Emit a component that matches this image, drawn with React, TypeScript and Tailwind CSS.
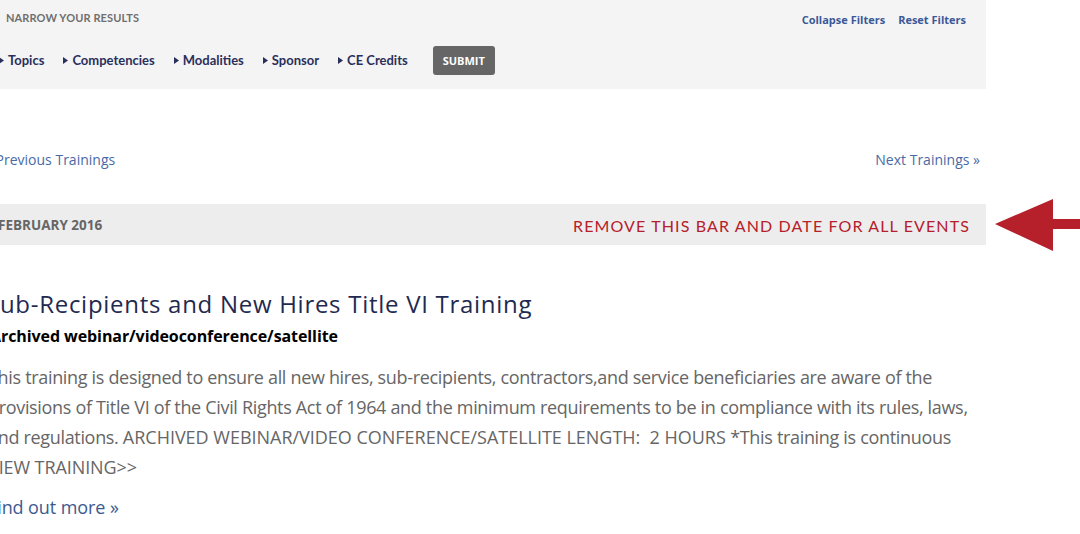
import React from "react";

const Tri = () => (
  <svg width="5" height="7" viewBox="0 0 5 7" className="mr-[4px] mt-[1px]">
    <path d="M0 0 L5 3.5 L0 7 Z" fill="#2b2f5c" />
  </svg>
);

const filters = ["Topics", "Competencies", "Modalities", "Sponsor", "CE Credits"];

export default function App() {
  return (
    <div className="relative w-[1080px] h-[534px] overflow-hidden bg-white font-['Open_Sans',sans-serif]">
      <div className="ml-[-12px] w-[998px]">
        {/* Filter box */}
        <div className="h-[89px] bg-[#f4f4f4] pl-[11px] pr-[20px]">
          <div className="flex justify-between items-start pt-[11px]">
            <div className="ml-[7px] text-[11px] leading-[14px] font-bold text-[#6f6f6f] tracking-[0.01em] font-['Lato',sans-serif]">
              NARROW YOUR RESULTS
            </div>
            <div className="flex gap-[13px] mt-[2px] text-[11px] leading-[14px] font-bold text-[#3b5998]">
              <span>Collapse Filters</span>
              <span>Reset Filters</span>
            </div>
          </div>
          <div className="flex items-center mt-[19px]">
            {filters.map((f) => (
              <div
                key={f}
                className="flex items-center mr-[19px] text-[13px] leading-[18px] font-bold text-[#2b2f5c] font-['Lato',sans-serif] -translate-y-[1px]"
              >
                <Tri />
                <span>{f}</span>
              </div>
            ))}
            <div className="ml-[6px] h-[29px] w-[62px] pt-[2px] rounded-[3px] bg-[#666666] flex items-center justify-center text-[11px] font-bold text-white">
              SUBMIT
            </div>
          </div>
        </div>

        {/* Nav */}
        <div className="mt-[61px] flex justify-between pr-[6px] text-[14px] leading-[20px] text-[#4a6aa5]">
          <span className="ml-[-3px]">« Previous Trainings</span>
          <span>Next Trainings »</span>
        </div>

        {/* Date bar */}
        <div className="mt-[34px] h-[41px] pt-[2px] bg-[#ededed] flex items-center justify-between pl-[10px] pr-[16px]">
          <span className="text-[13.5px] font-bold text-[#666666]">FEBRUARY 2016</span>
          <span className="text-[16px] text-[#b5202a] tracking-[0.07em] font-['Lato',sans-serif]">
            REMOVE THIS BAR AND DATE FOR ALL EVENTS
          </span>
        </div>

        {/* Event */}
        <div>
          <div className="mt-[43px] ml-[-2px] text-[24px] leading-[32px] tracking-[0.03em] text-[#1f2a50]">
            Sub-Recipients and New Hires Title VI Training
          </div>
          <div className="mt-[5px] ml-[2px] text-[16px] leading-[22px] font-bold text-black tracking-[-0.005em]">
            Archived webinar/videoconference/satellite
          </div>
          <div className="mt-[15px] text-[18px] leading-[30px] tracking-[-0.018em] text-[#666666] whitespace-nowrap">
            <div>This training is designed to ensure all new hires, sub-recipients, contractors,and service beneficiaries are aware of the</div>
            <div>provisions of Title VI of the Civil Rights Act of 1964 and the minimum requirements to be in compliance with its rules, laws,</div>
            <div>
              and regulations. <span className="tracking-[-0.001em]">ARCHIVED WEBINAR/VIDEO CONFERENCE/SATELLITE LENGTH:&nbsp; 2 HOURS</span> *This training is continuous
            </div>
            <div className="tracking-[-0.005em]">VIEW TRAINING&gt;&gt;</div>
          </div>
          <div className="mt-[10px] text-[18px] leading-[30px] tracking-[-0.005em] text-[#3d5a8f]">
            Find out more »
          </div>
        </div>
      </div>

      {/* Annotation arrow */}
      <svg className="absolute left-[995px] top-[199px]" width="85" height="52" viewBox="0 0 85 52">
        <path d="M0 25 L58 0 L58 20 L85 20 L85 30 L58 30 L58 52 Z" fill="#b5202a" />
      </svg>
    </div>
  );
}
